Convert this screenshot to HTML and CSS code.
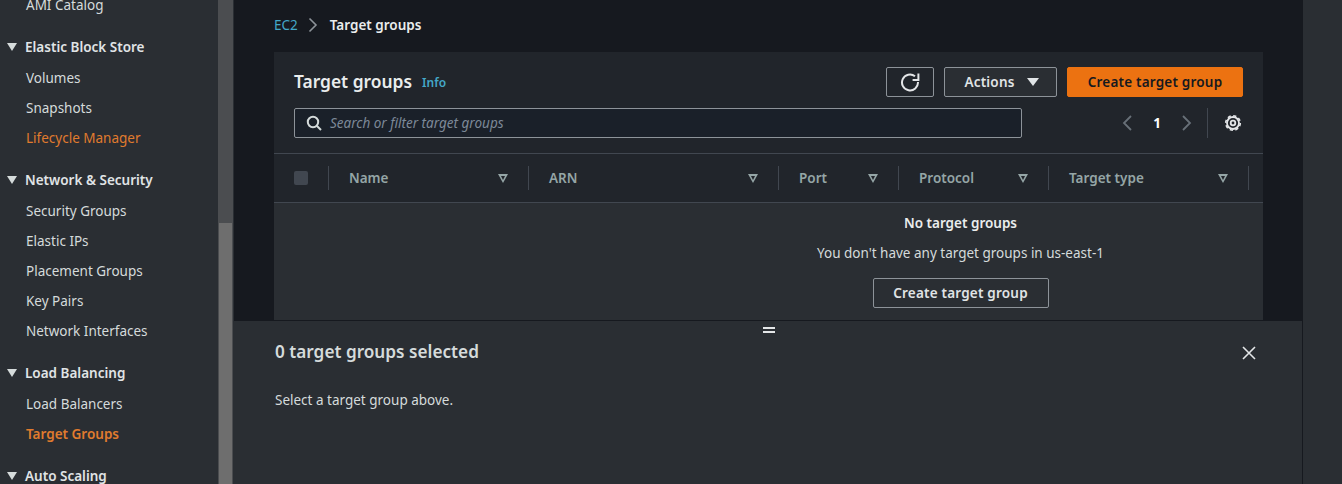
FILE: index.html
```html
<!DOCTYPE html>
<html lang="en">
<head>
  <meta charset="UTF-8">
  <meta name="viewport" content="width=device-width, initial-scale=1.0">
  <title>Target groups</title>
  <link rel="stylesheet" href="styles.css">
</head>
<body>
  <div class="shell">

    <nav class="side-nav">
      <ul class="nav-list">
        <li class="nav-item">AMI Catalog</li>
        <li class="nav-head"><span class="caret"></span>Elastic Block Store</li>
        <li class="nav-item">Volumes</li>
        <li class="nav-item">Snapshots</li>
        <li class="nav-item is-link">Lifecycle Manager</li>
        <li class="nav-head"><span class="caret"></span>Network &amp; Security</li>
        <li class="nav-item">Security Groups</li>
        <li class="nav-item">Elastic IPs</li>
        <li class="nav-item">Placement Groups</li>
        <li class="nav-item">Key Pairs</li>
        <li class="nav-item">Network Interfaces</li>
        <li class="nav-head"><span class="caret"></span>Load Balancing</li>
        <li class="nav-item">Load Balancers</li>
        <li class="nav-item is-link is-active">Target Groups</li>
        <li class="nav-head"><span class="caret"></span>Auto Scaling</li>
      </ul>
    </nav>

    <div class="scroll-track"><div class="scroll-thumb"></div></div>

    <main class="main">
      <section class="content">
        <div class="crumbs">
          <a class="crumb-link">EC2</a>
          <svg class="crumb-sep" width="10" height="16" viewBox="0 0 10 16"><path d="M1.5 1.5 8 8l-6.5 6.5" fill="none" stroke="#8d9399" stroke-width="1.6"/></svg>
          <span class="crumb-here">Target groups</span>
        </div>

        <div class="card">
          <div class="card-top">
            <div class="top-row">
              <h1 class="card-title">Target groups</h1>
              <a class="info">Info</a>
              <div class="actions">
                <button class="btn btn-icon">
                  <svg width="20" height="20" viewBox="0 0 20 20" fill="none" stroke="#e4e6e8" stroke-width="2"><path d="M15 4.2A8 8 0 1 0 18 10"/><path d="M18.4 1.5V8H12.6"/></svg>
                </button>
                <button class="btn btn-actions">Actions <span class="btn-caret"></span></button>
                <button class="btn btn-primary">Create target group</button>
              </div>
            </div>
            <div class="filter-row">
              <div class="search">
                <svg width="16" height="16" viewBox="0 0 16 16" fill="none" stroke="#d5dbdb" stroke-width="2"><circle cx="7" cy="7" r="5.2"/><path d="m11 11 4 4"/></svg>
                <span class="search-text">Search or filter target groups</span>
              </div>
              <div class="pager">
                <svg width="12" height="16" viewBox="0 0 12 16" fill="none" stroke="#687078" stroke-width="1.8"><path d="M10 1 3 8l7 7"/></svg>
                <span class="page-num">1</span>
                <svg width="12" height="16" viewBox="0 0 12 16" fill="none" stroke="#687078" stroke-width="1.8"><path d="m2 1 7 7-7 7"/></svg>
              </div>
              <div class="gear-wrap">
                <svg width="18" height="18" viewBox="0 0 18 18" fill="none" stroke="#e4e6e8"><circle cx="9" cy="9" r="6" stroke-width="1.8"/><circle cx="9" cy="9" r="7.3" stroke-width="1.6" stroke-dasharray="3.2 2.53"/><circle cx="9" cy="9" r="2.3" stroke-width="1.8"/></svg>
              </div>
            </div>
          </div>

          <div class="table-head">
            <div class="th th-check"><span class="check"></span></div>
            <div class="th th-name">Name<span class="sort"></span></div>
            <div class="th th-arn">ARN<span class="sort"></span></div>
            <div class="th th-port">Port<span class="sort"></span></div>
            <div class="th th-proto">Protocol<span class="sort"></span></div>
            <div class="th th-type">Target type<span class="sort"></span></div>
          </div>

          <div class="empty">
            <div class="empty-title">No target groups</div>
            <div class="empty-text">You don't have any target groups in us-east-1</div>
            <button class="btn btn-wide">Create target group</button>
          </div>
        </div>
      </section>

      <section class="split">
        <div class="grip"></div>
        <div class="split-head">
          <h2 class="split-title">0 target groups selected</h2>
          <svg class="split-close" width="16" height="16" viewBox="0 0 16 16" fill="none" stroke="#e4e6e8" stroke-width="1.6"><path d="m2 2 12 12M14 2 2 14"/></svg>
        </div>
        <p class="split-text">Select a target group above.</p>
      </section>
    </main>

    <aside class="right-rail"></aside>
  </div>
</body>
</html>
```

FILE: styles.css
```css
* { box-sizing: border-box; }
html, body { margin: 0; height: 100%; overflow: hidden; }
body { background: #16191f; color: #d5dbdb; font-family: "Noto Sans", "Open Sans", sans-serif; font-size: 14px; }

.shell { display: grid; grid-template-columns: 218px 16px 1fr 39px; height: 484px; }

/* left nav */
.side-nav { background: #2a2e33; overflow: hidden; }
.nav-list { list-style: none; margin: -10px 0 0; padding: 0; }
.nav-item { height: 30px; line-height: 30px; padding-left: 26px; color: #d5dbdb; font-size: 13.5px; }
.nav-head { height: 32px; line-height: 32px; margin-top: 11px; padding-left: 7px; display: flex; align-items: center; gap: 8px; color: #e0e4e6; font-weight: 600; font-size: 13.5px; }
.caret { width: 0; height: 0; border-left: 5px solid transparent; border-right: 5px solid transparent; border-top: 8px solid #d5dbdb; }
.is-link { color: #e07b2e; }
.is-active { font-weight: 600; }

.scroll-track { background: #4b4d50; padding: 223px 1px 0 1px; border-right: 1px solid #2a2e33; }
.scroll-thumb { background: #6e6e6e; height: 100%; }

/* main column */
.main { display: flex; flex-direction: column; min-width: 0; }
.content { height: 320px; overflow: hidden; padding: 0 40px; }

.crumbs { height: 52px; padding-bottom: 2px; display: flex; align-items: center; font-size: 13.5px; }
.crumb-link { color: #44a8c8; }
.crumb-sep { margin: 0 12px 0 10px; }
.crumb-here { color: #eaeded; font-weight: 600; }

.card { background: #21252b; }
.card-top { padding: 15px 20px 0; height: 102px; border-bottom: 1px solid #414750; }
.top-row { display: flex; align-items: center; height: 30px; }
.card-title { margin: -2px 0 0; color: #eaeded; font-size: 17.4px; font-weight: 600; }
.info { margin-left: 10px; margin-top: 1px; color: #44a8c8; font-size: 12px; font-weight: 600; }
.actions { margin-left: auto; display: flex; gap: 10px; }

.btn { height: 30px; background: #2a2e33; border: 1px solid #8d9399; border-radius: 2px; color: #e0e4e6; font: 600 13.5px "Noto Sans", sans-serif; letter-spacing: 0.2px; padding: 0; display: flex; align-items: center; justify-content: center; }
.btn-icon { width: 48px; background: #21252b; }
.btn-actions { width: 113px; gap: 12px; padding-left: 2px; }
.btn-caret { width: 0; height: 0; border-left: 6px solid transparent; border-right: 6px solid transparent; border-top: 8px solid #e0e4e6; }
.btn-primary { width: 176px; background: #ec7211; border-color: #ec7211; color: #16191f; }
.btn-wide { width: 176px; margin: 0 auto; }

.filter-row { display: flex; align-items: center; margin-top: 11px; height: 30px; }
.search { width: 728px; height: 30px; display: flex; align-items: center; gap: 8px; padding-left: 11px; background: #1a2029; border: 1px solid #8d9399; border-radius: 2px; }
.search-text { color: #7d8998; font-style: italic; font-size: 13.5px; }
.pager { margin-left: 99px; width: 72px; display: flex; align-items: center; justify-content: space-between; }
.page-num { color: #fff; font-weight: 700; font-size: 13.5px; }
.gear-wrap { margin-left: 14px; padding-left: 16px; height: 30px; display: flex; align-items: center; border-left: 1px solid #414750; }

.table-head { display: grid; grid-template-columns: 55px 200px 250px 120px 150px 200px; height: 49px; align-items: center; border-bottom: 1px solid #414750; }
.th { height: 24px; display: flex; align-items: center; justify-content: space-between; padding: 0 20px; border-right: 1px solid #414750; color: #95a5a6; font-weight: 600; font-size: 13.5px; }
.th-check { padding: 0 0 0 20px; }
.check { width: 14px; height: 14px; background: #414750; border-radius: 2px; }
.sort { width: 0; height: 0; position: relative; border-left: 5.5px solid transparent; border-right: 5.5px solid transparent; border-top: 9px solid #95a5a6; }
.sort::after { content: ""; position: absolute; left: -2.5px; top: -7px; border-left: 2.5px solid transparent; border-right: 2.5px solid transparent; border-top: 4px solid #21252b; }

.empty { background: #2a2e33; height: 120px; padding: 9px 0 0 384px; text-align: center; }
.empty-title { color: #eaeded; font-weight: 600; font-size: 13.5px; line-height: 22px; }
.empty-text { color: #d5dbdb; font-size: 13.5px; line-height: 22px; margin: 8px 0 14px; }

/* bottom split panel */
.split { flex: 1; position: relative; background: #2a2e33; border-top: 1px solid #16191f; border-right: 1px solid #16191f; padding: 0 41px; }
.grip { position: absolute; left: 529px; top: 6px; width: 12px; height: 6px; border-top: 2px solid #e4e6e8; border-bottom: 2px solid #e4e6e8; }
.split-head { display: flex; align-items: center; justify-content: space-between; height: 61px; }
.split-title { margin: 0; color: #d5dbdb; font-size: 17.2px; font-weight: 600; }
.split-close { margin-right: 4px; margin-top: 3px; }
.split-text { margin: 7px 0 0; font-size: 13.5px; color: #d5dbdb; line-height: 22px; }

.right-rail { background: #2a2e33; }
```
